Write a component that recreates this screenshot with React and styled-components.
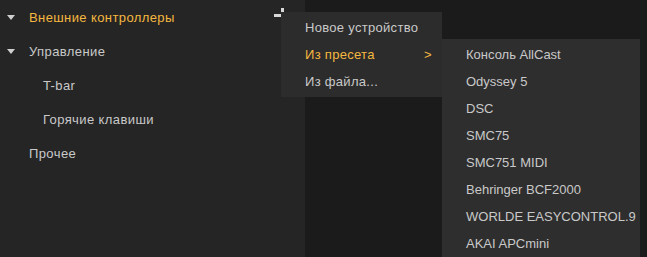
import React from 'react';
import styled, { createGlobalStyle } from 'styled-components';

const GlobalStyle = createGlobalStyle`
	html, body {
		margin: 0;
		padding: 0;
		background: #1b1b1b;
	}
	body {
		font-family: "Liberation Sans", Arial, sans-serif;
		font-size: 13px;
		color: #c9c9c9;
	}
`

const Page = styled.div`
	position: relative;
	display: flex;
	width: 647px;
	height: 257px;
	overflow: hidden;
	background: #1b1b1b;
`

const Sidebar = styled.div`
	position: relative;
	width: 305px;
	background: #252525;
	display: flex;
	flex-direction: column;
`

const TreeRow = styled.div`
	display: flex;
	align-items: center;
	height: 34px;
	padding-left: ${p => p.depth * 14 + 7}px;
	letter-spacing: 0.4px;
	color: ${p => (p.active ? '#f4b73f' : '#c9c9c9')};
	cursor: default;
`

const Caret = styled.span`
	width: 8px;
	height: 0;
	margin-right: 14px;
	border-left: 4px solid transparent;
	border-right: 4px solid transparent;
	border-top: ${p => (p.open ? '5px solid #cfcfcf' : 'none')};
	box-sizing: border-box;
`

const Spacer = styled.span`
	width: 22px;
`

const AddIcon = styled.svg`
	position: absolute;
	left: 274px;
	top: 8px;
`

const Menu = styled.div`
	position: absolute;
	left: ${p => p.x}px;
	top: ${p => p.y}px;
	width: ${p => p.w}px;
	padding: 2px 0;
	background: ${p => p.bg};
	letter-spacing: ${p => p.spacing || 0}px;
	box-sizing: border-box;
`

const MenuItem = styled.div`
	display: flex;
	align-items: center;
	justify-content: space-between;
	height: 27px;
	padding: 0 10px 0 24px;
	color: ${p => (p.active ? '#f4b73f' : '#c9c9c9')};
	white-space: nowrap;
`

const Arrow = styled.span`
	color: #f4b73f;
`

const presets = [
	'Консоль AllCast',
	'Odyssey 5',
	'DSC',
	'SMC75',
	'SMC751 MIDI',
	'Behringer BCF2000',
	'WORLDE EASYCONTROL.9',
	'AKAI APCmini',
]

const App = () => (
	<Page>
		<GlobalStyle />
		<Sidebar>
			<TreeRow depth={0} active>
				<Caret open />
				Внешние контроллеры
			</TreeRow>
			<TreeRow depth={0}>
				<Caret open />
				Управление
			</TreeRow>
			<TreeRow depth={1}>
				<Spacer />
				T-bar
			</TreeRow>
			<TreeRow depth={1}>
				<Spacer />
				Горячие клавиши
			</TreeRow>
			<TreeRow depth={0}>
				<Spacer />
				Прочее
			</TreeRow>
		</Sidebar>

		<AddIcon width="13" height="13" viewBox="0 0 13 13">
			<rect x="0" y="6" width="13" height="3" fill="#d8d8d8" />
			<rect x="7" y="0" width="3" height="13" fill="#d8d8d8" />
		</AddIcon>

		<Menu x={281} y={12} w={161} bg="#2c2c2c" spacing={0.3}>
			<MenuItem>Новое устройство</MenuItem>
			<MenuItem active>
				Из пресета
				<Arrow>&gt;</Arrow>
			</MenuItem>
			<MenuItem>Из файла...</MenuItem>
		</Menu>

		<Menu x={442} y={39} w={198} bg="#2e2e2e">
			{presets.map(name => (
				<MenuItem key={name}>{name}</MenuItem>
			))}
		</Menu>
	</Page>
)

export default App;
